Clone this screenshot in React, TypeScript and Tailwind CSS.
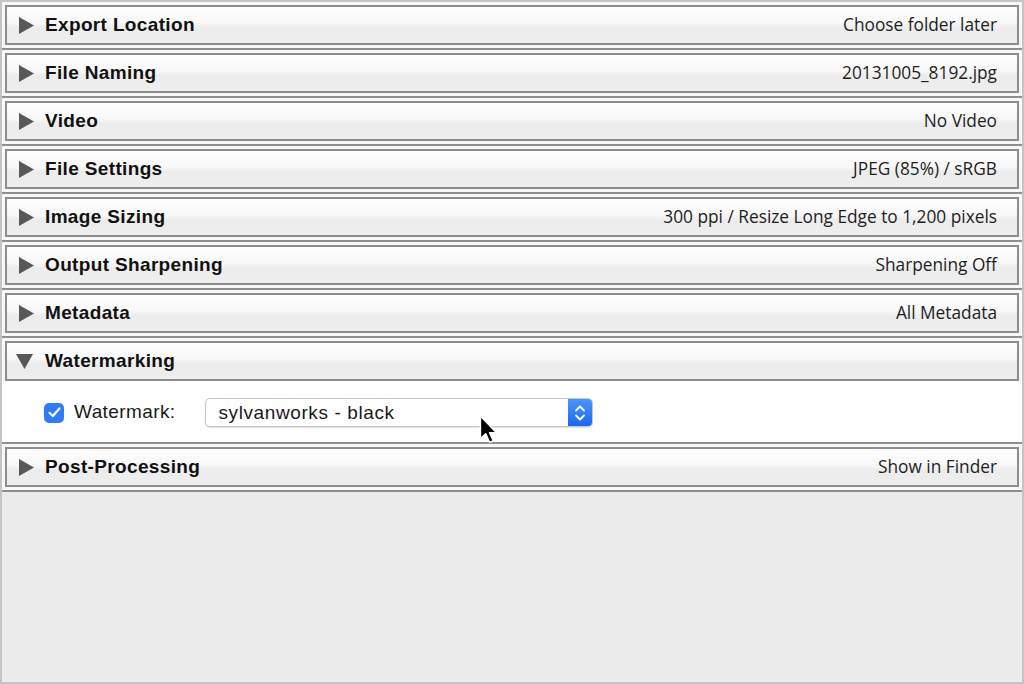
import React from 'react';

interface Section {
  title: string;
  summary?: string;
  open?: boolean;
}

const sections: Section[] = [
  { title: 'Export Location', summary: 'Choose folder later' },
  { title: 'File Naming', summary: '20131005_8192.jpg' },
  { title: 'Video', summary: 'No Video' },
  { title: 'File Settings', summary: 'JPEG (85%) / sRGB' },
  { title: 'Image Sizing', summary: '300 ppi / Resize Long Edge to 1,200 pixels' },
  { title: 'Output Sharpening', summary: 'Sharpening Off' },
  { title: 'Metadata', summary: 'All Metadata' },
  { title: 'Watermarking', open: true },
  { title: 'Post-Processing', summary: 'Show in Finder' },
];

const Disclosure: React.FC<{ open?: boolean }> = ({ open }) =>
  open ? (
    <svg width="17" height="15" viewBox="0 0 17 15" className="ml-[9px] mr-[12px]">
      <polygon points="0,0 17,0 8.5,15" fill="#585858" />
    </svg>
  ) : (
    <svg width="15" height="17" viewBox="0 0 15 17" className="ml-[12px] mr-[11px]">
      <polygon points="0,0 15,8.5 0,17" fill="#585858" />
    </svg>
  );

const Header: React.FC<{ section: Section }> = ({ section }) => (
  <div className="h-[40px] border-2 border-[#8d8d8d] flex items-center pr-[20px] bg-[linear-gradient(to_bottom,#fdfdfd_0%,#f9f9f9_42%,#ececec_58%,#eeeeee_100%)]">
    <Disclosure open={section.open} />
    <span className="text-[19px] font-bold tracking-[0.35px] text-[#111] font-['Liberation_Sans',Arial,sans-serif]">
      {section.title}
    </span>
    <span className="ml-auto text-[17.3px] text-[#1e1e1e] font-['Open_Sans',sans-serif]">
      {section.summary}
    </span>
  </div>
);

const Cursor: React.FC = () => (
  <svg width="22" height="30" viewBox="0 0 20 28" className="absolute left-[476px] top-[413px] pointer-events-none">
    <path d="M2 1 L2 22 L7 17.5 L10.5 25.5 L14 24 L10.5 16.5 L17 16.5 Z" fill="#000" stroke="#fff" strokeWidth="1.4" strokeLinejoin="round" />
  </svg>
);

const App: React.FC = () => {
  return (
    <div className="relative w-[1024px] h-[684px] bg-[#ebebeb] border-2 border-[#c4c4c4] flex flex-col overflow-hidden">
      {sections.map((s) => (
        <div key={s.title} className="bg-[#f8f8f8] border-b-2 border-[#8e8e8e] px-[3px] pt-[3px] pb-[3px]">
          <Header section={s} />
          {s.open && (
            <div className="h-[61px] bg-white -mx-[3px] -mb-[3px] flex items-center pl-[42px] font-['Liberation_Sans',Arial,sans-serif]">
              <div className="w-[20px] h-[20px] mt-[2px] rounded-[5px] bg-[#2f7cf6] flex items-center justify-center">
                <svg width="13" height="11" viewBox="0 0 13 11">
                  <path d="M1.5 5.8 L4.8 9 L11.5 1.5" fill="none" stroke="#fff" strokeWidth="2.2" strokeLinecap="round" strokeLinejoin="round" />
                </svg>
              </div>
              <span className="ml-[10px] mt-[2px] text-[19px] tracking-[0.4px] text-[#1a1a1a]">Watermark:</span>
              <div className="ml-[30px] mt-[2px] w-[388px] h-[29px] rounded-[5px] border border-[#c6c6c6] bg-white shadow-[0_1px_1px_rgba(0,0,0,0.12)] flex items-stretch overflow-hidden">
                <span className="flex-1 pl-[12px] pt-[1px] flex items-center text-[19px] tracking-[0.6px] text-[#1a1a1a]">
                  sylvanworks - black
                </span>
                <div className="w-[24px] bg-[linear-gradient(to_bottom,#4b95fc,#1b66f2)] flex items-center justify-center">
                  <svg width="12" height="18" viewBox="0 0 12 18">
                    <path d="M2 6.5 L6 2.5 L10 6.5 M2 11.5 L6 15.5 L10 11.5" fill="none" stroke="#fff" strokeWidth="1.8" strokeLinecap="round" strokeLinejoin="round" />
                  </svg>
                </div>
              </div>
            </div>
          )}
        </div>
      ))}
      <div className="flex-1" />
      <Cursor />
    </div>
  );
};

export default App;
